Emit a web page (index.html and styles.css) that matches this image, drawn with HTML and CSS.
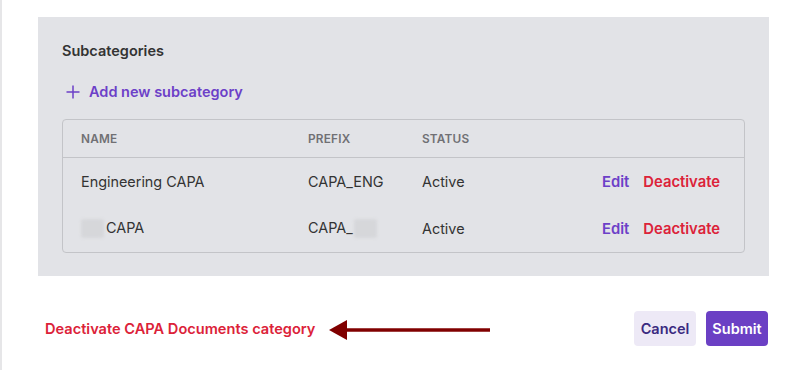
FILE: index.html
```html
<!DOCTYPE html>
<html lang="en">
<head>
    <meta charset="UTF-8">
    <meta name="viewport" content="width=device-width, initial-scale=1.0">
    <title>Edit Category</title>
    <link rel="stylesheet" href="styles.css">
</head>
<body>

<div class="page">
    <div class="panel">
        <h3 class="panel-title">Subcategories</h3>

        <a class="add-link" href="#">
            <svg class="plus" width="14" height="14" viewBox="0 0 14 14">
                <path d="M7 0.5V13.5M0.5 7H13.5" stroke="currentColor" stroke-width="1.5" fill="none"/>
            </svg>
            Add new subcategory
        </a>

        <div class="table-wrap">
            <table class="sub-table">
                <thead>
                    <tr>
                        <th class="col-name">Name</th>
                        <th class="col-prefix">Prefix</th>
                        <th class="col-status">Status</th>
                        <th class="col-actions"></th>
                    </tr>
                </thead>
                <tbody>
                    <tr>
                        <td>Engineering CAPA</td>
                        <td>CAPA_ENG</td>
                        <td>Active</td>
                        <td class="actions"><a class="edit" href="#">Edit</a><a class="deact" href="#">Deactivate</a></td>
                    </tr>
                    <tr>
                        <td><span class="blur"></span>CAPA</td>
                        <td>CAPA_<span class="blur blur-tail"></span></td>
                        <td>Active</td>
                        <td class="actions"><a class="edit" href="#">Edit</a><a class="deact" href="#">Deactivate</a></td>
                    </tr>
                </tbody>
            </table>
        </div>
    </div>

    <div class="footer">
        <div class="footer-left">
            <a class="deact-category" href="#">Deactivate CAPA Documents category</a>
            <svg class="arrow" width="162" height="24" viewBox="0 0 162 24">
                <path d="M17 10.2H161V13.8H17Z" fill="#800000"/>
                <path d="M0 12L18 2V22Z" fill="#800000"/>
            </svg>
        </div>
        <div class="footer-buttons">
            <button class="btn btn-cancel">Cancel</button>
            <button class="btn btn-submit">Submit</button>
        </div>
    </div>
</div>

</body>
</html>
```

FILE: styles.css
```css
body {
    margin: 0;
    padding: 0;
    font-family: 'Inter', 'Noto Sans', sans-serif;
    background-color: #fff;
    color: #333;
}

.page {
    border-left: 2px solid #e6e6e8;
    min-height: 370px;
    box-sizing: border-box;
    padding: 17px 0 0 36px;
    width: 769px;
}

.panel {
    background-color: #e2e3e7;
    padding: 24px 24px 23px 24px;
}

.panel-title {
    margin: 0;
    font-size: 14.5px;
    font-weight: 600;
    line-height: 20px;
    color: #333;
}

.add-link {
    display: inline-flex;
    align-items: center;
    gap: 9px;
    margin: 21px 0 0 4px;
    font-size: 14.5px;
    font-weight: 600;
    line-height: 20px;
    color: #6c40c8;
    text-decoration: none;
}

.table-wrap {
    margin-top: 16px;
    border: 1px solid #c3c4c8;
    border-radius: 4px;
}

.sub-table {
    width: 100%;
    border-collapse: collapse;
    table-layout: fixed;
    font-size: 14.4px;
}

.sub-table th {
    text-align: left;
    font-size: 11.8px;
    font-weight: 600;
    letter-spacing: 0.2px;
    text-transform: uppercase;
    color: #707074;
    height: 37px;
    padding: 0;
    border-bottom: 1px solid #c3c4c8;
}

.sub-table td {
    height: 47px;
    padding: 0;
    color: #333;
}

.col-name {
    width: 227px;
    padding-left: 18px !important;
}

.sub-table td:first-child {
    padding-left: 18px;
}

.col-prefix {
    width: 114px;
}

.col-status {
    width: 100px;
}

.actions {
    text-align: right;
    padding-right: 24px !important;
    font-size: 14.8px;
}

.actions a {
    font-weight: 600;
    text-decoration: none;
}

.edit {
    color: #6c40c8;
    margin-right: 14px;
}

.deact {
    color: #dc2239;
}

.blur {
    display: inline-block;
    width: 23px;
    height: 19px;
    vertical-align: middle;
    margin-right: 2px;
    background-color: #d6d7da;
    border-radius: 3px;
    filter: blur(1.5px);
}

.blur-tail {
    margin-left: 1px;
}

.footer {
    display: flex;
    justify-content: space-between;
    align-items: center;
    padding-top: 35px;
    padding-right: 1px;
}

.footer-left {
    display: flex;
    align-items: center;
    margin-left: 7px;
}

.deact-category {
    font-size: 14.6px;
    font-weight: 600;
    color: #dc2239;
    text-decoration: none;
}

.arrow {
    margin-left: 14px;
    margin-top: 3px;
}

.footer-buttons {
    display: flex;
    gap: 10px;
}

.btn {
    font-family: 'Inter', 'Noto Sans', sans-serif;
    font-size: 14.5px;
    font-weight: 600;
    height: 35px;
    padding: 0;
    border: none;
    border-radius: 4px;
    cursor: pointer;
}

.btn-cancel {
    background-color: #ede9f6;
    color: #3a2a80;
    width: 62px;
}

.btn-submit {
    background-color: #6b40c4;
    color: #fff;
    width: 62px;
}
```
